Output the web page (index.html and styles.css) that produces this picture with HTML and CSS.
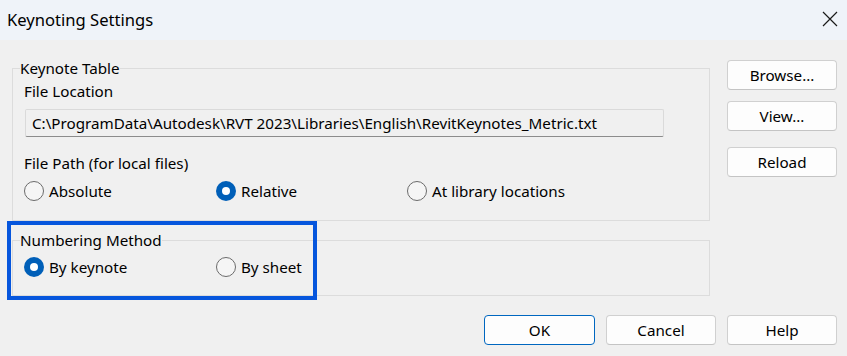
FILE: index.html
```html
<!DOCTYPE html>
<html lang="en">
<head>
    <meta charset="UTF-8">
    <meta name="viewport" content="width=device-width, initial-scale=1.0">
    <title>Keynoting Settings</title>
    <link rel="stylesheet" href="styles.css">
</head>
<body>
    <div class="titlebar">
        <span class="title">Keynoting Settings</span>
        <svg class="close" width="16" height="16" viewBox="0 0 16 16">
            <path d="M1 1 L15 15 M15 1 L1 15" stroke="#1a1a1a" stroke-width="1.2" fill="none"/>
        </svg>
    </div>

    <div class="main">
        <div class="groups">
            <fieldset class="group table-group">
                <legend>Keynote Table</legend>
                <div class="label">File Location</div>
                <div class="path">C:\ProgramData\Autodesk\RVT 2023\Libraries\English\RevitKeynotes_Metric.txt</div>
                <div class="label spaced">File Path (for local files)</div>
                <div class="radios">
                    <label class="radio"><span class="dot"></span>Absolute</label>
                    <label class="radio"><span class="dot on"></span>Relative</label>
                    <label class="radio"><span class="dot"></span>At library locations</label>
                </div>
            </fieldset>

            <fieldset class="group numbering-group">
                <legend>Numbering Method</legend>
                <div class="radios">
                    <label class="radio"><span class="dot on"></span>By keynote</label>
                    <label class="radio"><span class="dot"></span>By sheet</label>
                </div>
            </fieldset>
        </div>

        <div class="side">
            <button class="btn">Browse...</button>
            <button class="btn">View...</button>
            <button class="btn reload">Reload</button>
        </div>
    </div>

    <div class="footer">
        <button class="btn default">OK</button>
        <button class="btn">Cancel</button>
        <button class="btn">Help</button>
    </div>

    <div class="highlight"></div>
</body>
</html>
```

FILE: styles.css
```css
body {
    margin: 0;
    width: 847px;
    height: 356px;
    background-color: #f0f0f0;
    color: #000000;
    font-family: 'Noto Sans', 'Open Sans', sans-serif;
    font-size: 15.2px;
    position: relative;
    overflow: hidden;
}
.titlebar {
    height: 40px;
    background-color: #eff3f9;
    display: flex;
    align-items: center;
    justify-content: space-between;
    padding: 0 9px 0 7px;
}
.title {
    font-size: 16.6px;
    margin-top: -2px;
}
.close {
    margin-top: -2px;
}
.main {
    display: flex;
    padding: 18px 10px 0 12px;
}
.groups {
    width: 698px;
}
.group {
    margin: 0;
    border: 1px solid #dcdcdc;
    padding: 3px 0 19px 11px;
    min-width: 0;
}
.group legend {
    padding: 0;
    margin-left: -4px;
    line-height: 20px;
}
.numbering-group {
    margin-top: 9px;
    padding-top: 7px;
    padding-bottom: 18px;
}
.label {
    line-height: 20px;
}
.label.spaced {
    margin-top: 16px;
}
.path {
    margin: 8px 0 0 1px;
    width: 639px;
    height: 28px;
    box-sizing: border-box;
    border: 1px solid #dadada;
    border-bottom-color: #8c8c8c;
    border-radius: 2px;
    background-color: #f0f0f0;
    padding-left: 6px;
    line-height: 26px;
    white-space: nowrap;
}
.radios {
    display: grid;
    grid-template-columns: 192px 191px 192px;
    margin-top: 8px;
}
.numbering-group .radios {
    margin-top: 0;
}
.radio {
    display: flex;
    align-items: center;
    gap: 5px;
    line-height: 20px;
}
.dot {
    width: 18px;
    height: 18px;
    border: 1px solid #6b6b6b;
    border-radius: 50%;
    background-color: #f5f5f5;
}
.dot.on {
    width: 20px;
    height: 20px;
    border: none;
    background-color: #005fb8;
    position: relative;
}
.dot.on::after {
    content: '';
    position: absolute;
    left: 6px;
    top: 6px;
    width: 8px;
    height: 8px;
    border-radius: 50%;
    background-color: #ffffff;
}
.side {
    display: flex;
    flex-direction: column;
    margin: 2px 0 0 17px;
    gap: 11px;
}
.btn {
    width: 110px;
    height: 30px;
    background-color: #fdfdfd;
    border: 1px solid #d0d0d0;
    border-bottom-color: #c4c4c4;
    border-radius: 4px;
    font-family: inherit;
    font-size: 15.2px;
    color: #000000;
    padding: 0;
}
.btn.reload {
    margin-top: 5px;
}
.footer {
    display: flex;
    justify-content: flex-end;
    gap: 11px;
    padding: 19px 10px 0 0;
}
.btn.default {
    width: 111px;
    border-color: #0067c0;
}
.highlight {
    position: absolute;
    left: 7px;
    top: 221px;
    width: 302px;
    height: 71px;
    border: 4px solid #0656dd;
}
```
